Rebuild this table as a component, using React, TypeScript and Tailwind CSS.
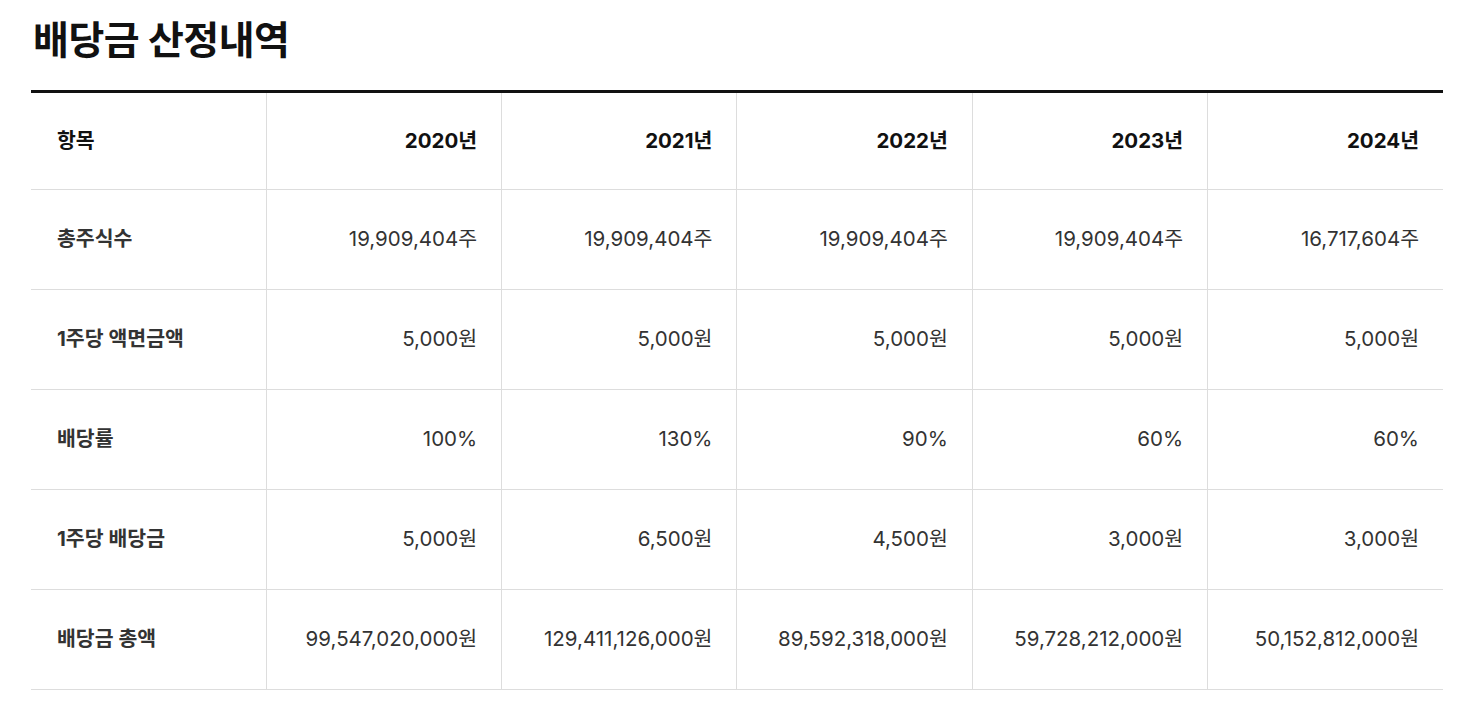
const years = ["2020년", "2021년", "2022년", "2023년", "2024년"];

const rows: { label: string; values: string[] }[] = [
  {
    label: "총주식수",
    values: ["19,909,404주", "19,909,404주", "19,909,404주", "19,909,404주", "16,717,604주"],
  },
  {
    label: "1주당 액면금액",
    values: ["5,000원", "5,000원", "5,000원", "5,000원", "5,000원"],
  },
  {
    label: "배당률",
    values: ["100%", "130%", "90%", "60%", "60%"],
  },
  {
    label: "1주당 배당금",
    values: ["5,000원", "6,500원", "4,500원", "3,000원", "3,000원"],
  },
  {
    label: "배당금 총액",
    values: [
      "99,547,020,000원",
      "129,411,126,000원",
      "89,592,318,000원",
      "59,728,212,000원",
      "50,152,812,000원",
    ],
  },
];

export default function App() {
  return (
    <div className="min-h-screen bg-white pl-[31px] pr-[17px] pt-[14px] font-['Inter','Noto_Sans_CJK_KR',sans-serif] text-[#333]">
      <h1 className="pl-[2px] text-[39px] font-bold leading-[52px] tracking-[-0.5px] text-[#111]">
        배당금 산정내역
      </h1>

      <table className="mt-[24px] w-full table-fixed border-collapse border-t-[3px] border-[#111]">
        <thead>
          <tr className="h-[98px] border-b border-[#ddd]">
            <th className="px-[26px] text-left text-[20.5px] font-bold text-[#111]">항목</th>
            {years.map((y) => (
              <th
                key={y}
                className="border-l border-[#ddd] px-[24px] text-right text-[20.5px] font-bold text-[#111]"
              >
                {y}
              </th>
            ))}
          </tr>
        </thead>
        <tbody>
          {rows.map((r) => (
            <tr key={r.label} className="h-[100px] border-b border-[#ddd]">
              <td className="px-[26px] text-left text-[20.5px] font-bold text-[#333]">{r.label}</td>
              {r.values.map((v, i) => (
                <td
                  key={i}
                  className="border-l border-[#ddd] px-[24px] text-right text-[20.5px] text-[#333]"
                >
                  {v}
                </td>
              ))}
            </tr>
          ))}
        </tbody>
      </table>
    </div>
  );
}
